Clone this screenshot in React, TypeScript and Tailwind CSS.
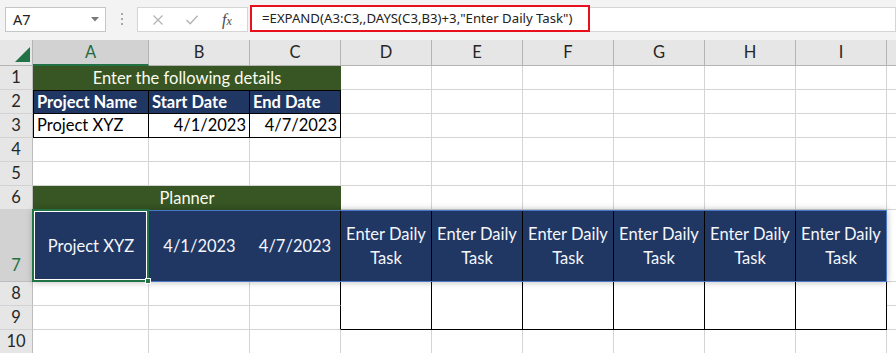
const DAYS = [0, 1, 2, 3, 4, 5]
const COLS = ['A', 'B', 'C', 'D', 'E', 'F', 'G', 'H', 'I']

function RowHead({ n, active }: { n: number; active?: boolean }) {
  if (active) {
    return (
      <div className="flex items-end justify-center pb-[3px] bg-[#d2d2d2] text-[#217346] border-r border-b border-[#bdbdbd]">
        {n}
      </div>
    )
  }
  return (
    <div className="flex items-center justify-center bg-[#e6e6e6] text-[#262626] border-r border-b border-[#d2d2d2] border-r-[#bdbdbd]">
      {n}
    </div>
  )
}

function Blank({ right }: { right?: string }) {
  return <div className={`border-r border-b border-[#d4d4d4] ${right ?? ''}`} />
}

function Edge() {
  return <div className="border-b border-[#d4d4d4]" />
}

function BlankRow({ n }: { n: number }) {
  return (
    <>
      <RowHead n={n} />
      {COLS.map((c) => (
        <Blank key={c} />
      ))}
      <Edge />
    </>
  )
}

function SixBlanks() {
  return (
    <>
      {DAYS.map((d) => (
        <Blank key={d} />
      ))}
      <Edge />
    </>
  )
}

export default function App() {
  return (
    <div className="w-[896px] h-[353px] overflow-hidden bg-white font-['Lato',sans-serif] text-[16.5px] text-black">
      {/* Formula bar */}
      <div className="h-[40px] bg-[#f3f3f3] flex">
        <div className="ml-[5px] mt-[7px] w-[101px] h-[25px] bg-white border border-[#c6c6c6] flex items-center justify-between pl-[7px] pr-[6px] font-['Noto_Sans',sans-serif] text-[14.5px] text-[#222]">
          <span>A7</span>
          <svg width="8" height="5" viewBox="0 0 8 5">
            <path d="M0 0H8L4 4.5Z" fill="#7a7a7a" />
          </svg>
        </div>
        <div className="ml-[15px] mt-[13px] w-[3px] flex flex-col gap-[3px]">
          <span className="w-[2px] h-[2px] bg-[#a8a8a8]" />
          <span className="w-[2px] h-[2px] bg-[#a8a8a8]" />
          <span className="w-[2px] h-[2px] bg-[#a8a8a8]" />
        </div>
        <div className="ml-[13px] mt-[7px] w-[111px] h-[25px] bg-white border border-[#d5d5d5] flex items-center">
          <svg className="ml-[15px]" width="10" height="10" viewBox="0 0 10 10">
            <path d="M0.5 0.5L9.5 9.5M9.5 0.5L0.5 9.5" stroke="#b4b4b4" strokeWidth="1.3" />
          </svg>
          <svg className="ml-[23px]" width="12" height="10" viewBox="0 0 12 10">
            <path d="M0.5 5L4.2 8.8L11.5 0.8" stroke="#b4b4b4" strokeWidth="1.4" fill="none" />
          </svg>
          <span className="ml-[24px] italic font-['Liberation_Serif',serif] text-[16px] text-[#4a4a4a] leading-none">
            f<span className="text-[12px]">x</span>
          </span>
        </div>
        <div className="ml-[2px] mt-[5px] w-[340px] h-[27px] border-2 border-[#e8101c] bg-white flex items-center pl-[10px] font-['Noto_Sans',sans-serif] text-[13.2px] text-[#222] whitespace-nowrap">
          =EXPAND(A3:C3,,DAYS(C3,B3)+3,"Enter Daily Task")
        </div>
        <div className="flex-1 mt-[7px] h-[25px] bg-white border-y border-r border-[#d5d5d5]" />
      </div>

      {/* Sheet */}
      <div className="grid grid-cols-[33px_116px_101px_91px_91px_91px_91px_91px_91px_91px_9px] grid-rows-[26px_24px_24px_24px_24px_24px_24px_72px_24px_24px_24px]">
        {/* Column headers */}
        <div className="relative bg-[#e6e6e6] border-r border-b border-[#b4b4b4]">
          <svg className="absolute left-[15px] top-[7px]" width="15" height="15" viewBox="0 0 15 15">
            <path d="M15 0V15H0Z" fill="#217346" />
          </svg>
        </div>
        {COLS.map((c) =>
          c === 'A' ? (
            <div key={c} className="flex items-center justify-center bg-[#d2d2d2] text-[#1d6b40] border-r border-[#b4b4b4] border-b-2 border-b-[#217346]">
              {c}
            </div>
          ) : (
            <div key={c} className="flex items-center justify-center bg-[#e6e6e6] text-[#262626] border-r border-b border-[#b4b4b4]">
              {c}
            </div>
          ),
        )}
        <div className="bg-[#e6e6e6] border-b border-[#b4b4b4]" />

        {/* Row 1 */}
        <RowHead n={1} />
        <div className="col-span-3 bg-[#375623] text-[#fbfbf0] flex items-center justify-center">
          Enter the following details
        </div>
        <SixBlanks />

        {/* Row 2 */}
        <RowHead n={2} />
        <div className="bg-[#203764] text-white font-bold flex items-center pl-[3px] border border-black whitespace-nowrap">Project Name</div>
        <div className="bg-[#203764] text-white font-bold flex items-center pl-[3px] border-r border-y border-black whitespace-nowrap">Start Date</div>
        <div className="bg-[#203764] text-white font-bold flex items-center pl-[3px] border-r border-y border-black whitespace-nowrap">End Date</div>
        <SixBlanks />

        {/* Row 3 */}
        <RowHead n={3} />
        <div className="flex items-center pl-[3px] border-l border-r border-b border-black">Project XYZ</div>
        <div className="flex items-center justify-end pr-[3px] border-r border-b border-black">4/1/2023</div>
        <div className="flex items-center justify-end pr-[3px] border-r border-b border-black">4/7/2023</div>
        <SixBlanks />

        <BlankRow n={4} />
        <BlankRow n={5} />

        {/* Row 6 */}
        <RowHead n={6} />
        <div className="col-span-3 bg-[#375623] text-[#fbfbf0] flex items-center justify-center">Planner</div>
        <SixBlanks />

        {/* Row 7 - spilled range */}
        <RowHead n={7} active />
        <div className="col-span-9 relative z-10 grid grid-cols-[116px_101px_91px_91px_91px_91px_91px_91px_91px] bg-[#203764] text-[#f4f6fb] outline outline-1 -outline-offset-1 outline-[#4a78c8] shadow-[0_0_7px_rgba(0,0,0,0.28)]">
          <div className="relative flex items-center justify-center">
            Project XYZ
            <div className="absolute -left-px -top-px w-[117px] h-[73px] border-2 border-[#217346] shadow-[inset_0_0_0_1px_#ffffff]" />
            <div className="absolute right-[-2px] bottom-[-2px] w-[6px] h-[6px] bg-[#217346] border border-white" />
          </div>
          <div className="flex items-center justify-center">4/1/2023</div>
          <div className="flex items-center justify-center border-r border-black">4/7/2023</div>
          {DAYS.map((d) => (
            <div key={d} className="flex items-center justify-center text-center leading-[24px] border-r border-black">
              Enter Daily
              <br />
              Task
            </div>
          ))}
        </div>
        <Edge />

        {/* Rows 8-9 */}
        <RowHead n={8} />
        <Blank />
        <Blank />
        <Blank right="border-r-black" />
        {DAYS.map((d) => (
          <div key={d} className="row-span-2 border-r border-b border-black" />
        ))}
        <Edge />
        <RowHead n={9} />
        <Blank />
        <Blank />
        <Blank right="border-r-black" />
        <Edge />

        <BlankRow n={10} />
      </div>
    </div>
  )
}
